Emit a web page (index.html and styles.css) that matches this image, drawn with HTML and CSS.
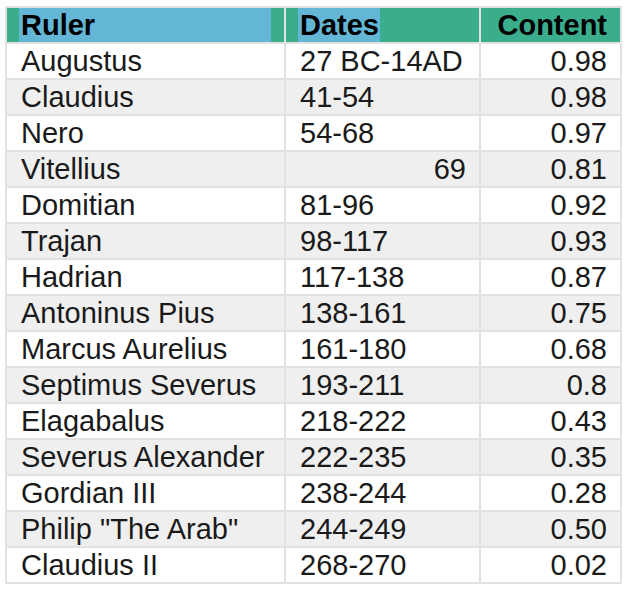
FILE: index.html
```html
<!DOCTYPE html>
<html>
<head>
<meta charset="utf-8">
<link rel="stylesheet" href="styles.css">
</head>
<body>
<table class="rulers">
  <thead>
    <tr>
      <th class="c-ruler"><div class="hl-full">Ruler</div></th>
      <th class="c-dates"><span class="hl-text">Dates</span></th>
      <th class="c-content num">Content</th>
    </tr>
  </thead>
  <tbody>
    <tr><td>Augustus</td><td>27 BC-14AD</td><td class="num">0.98</td></tr>
    <tr><td>Claudius</td><td>41-54</td><td class="num">0.98</td></tr>
    <tr><td>Nero</td><td>54-68</td><td class="num">0.97</td></tr>
    <tr><td>Vitellius</td><td class="num">69</td><td class="num">0.81</td></tr>
    <tr><td>Domitian</td><td>81-96</td><td class="num">0.92</td></tr>
    <tr><td>Trajan</td><td>98-117</td><td class="num">0.93</td></tr>
    <tr><td>Hadrian</td><td>117-138</td><td class="num">0.87</td></tr>
    <tr><td>Antoninus Pius</td><td>138-161</td><td class="num">0.75</td></tr>
    <tr><td>Marcus Aurelius</td><td>161-180</td><td class="num">0.68</td></tr>
    <tr><td>Septimus Severus</td><td>193-211</td><td class="num">0.8</td></tr>
    <tr><td>Elagabalus</td><td>218-222</td><td class="num">0.43</td></tr>
    <tr><td>Severus Alexander</td><td>222-235</td><td class="num">0.35</td></tr>
    <tr><td>Gordian III</td><td>238-244</td><td class="num">0.28</td></tr>
    <tr><td>Philip "The Arab"</td><td>244-249</td><td class="num">0.50</td></tr>
    <tr><td>Claudius II</td><td>268-270</td><td class="num">0.02</td></tr>
  </tbody>
</table>
</body>
</html>
```
FILE: styles.css
```css
html, body {
  margin: 0;
  padding: 0;
  background: #ffffff;
}

body {
  padding: 6px 0 0 5px;
  font-family: "Liberation Sans", Arial, Helvetica, sans-serif;
  font-size: 29px;
  color: #1a1a1a;
}

.rulers {
  border-collapse: separate;
  border-spacing: 0;
  table-layout: fixed;
  width: 617px;
  border-top: 2px solid #e2e2e2;
}

.rulers th,
.rulers td {
  box-sizing: border-box;
  height: 36px;
  padding: 0 13px 0 14px;
  line-height: 34px;
  border-right: 2px solid #e2e2e2;
  border-bottom: 2px solid #e2e2e2;
  text-align: left;
  white-space: nowrap;
  overflow: hidden;
  vertical-align: top;
}

.rulers tr > :first-child {
  border-left: 2px solid #e2e2e2;
}

.rulers th {
  font-weight: bold;
  color: #000;
  background: #3aae8c;
}

.rulers th.c-ruler {
  width: 281px;
  padding: 0 13px 0 12px;
}

.rulers th.c-dates {
  width: 195px;
  padding-left: 12px;
}

.rulers th.c-content {
  width: 141px;
}

.hl-full {
  background: #64b6d6;
  padding-left: 2px;
  height: 34px;
}

.hl-text {
  display: inline-block;
  background: #64b6d6;
  padding: 0 1px 0 2px;
  height: 34px;
}

.rulers .num {
  text-align: right;
}

.rulers tbody tr:nth-child(even) td {
  background: #efefef;
}
```
